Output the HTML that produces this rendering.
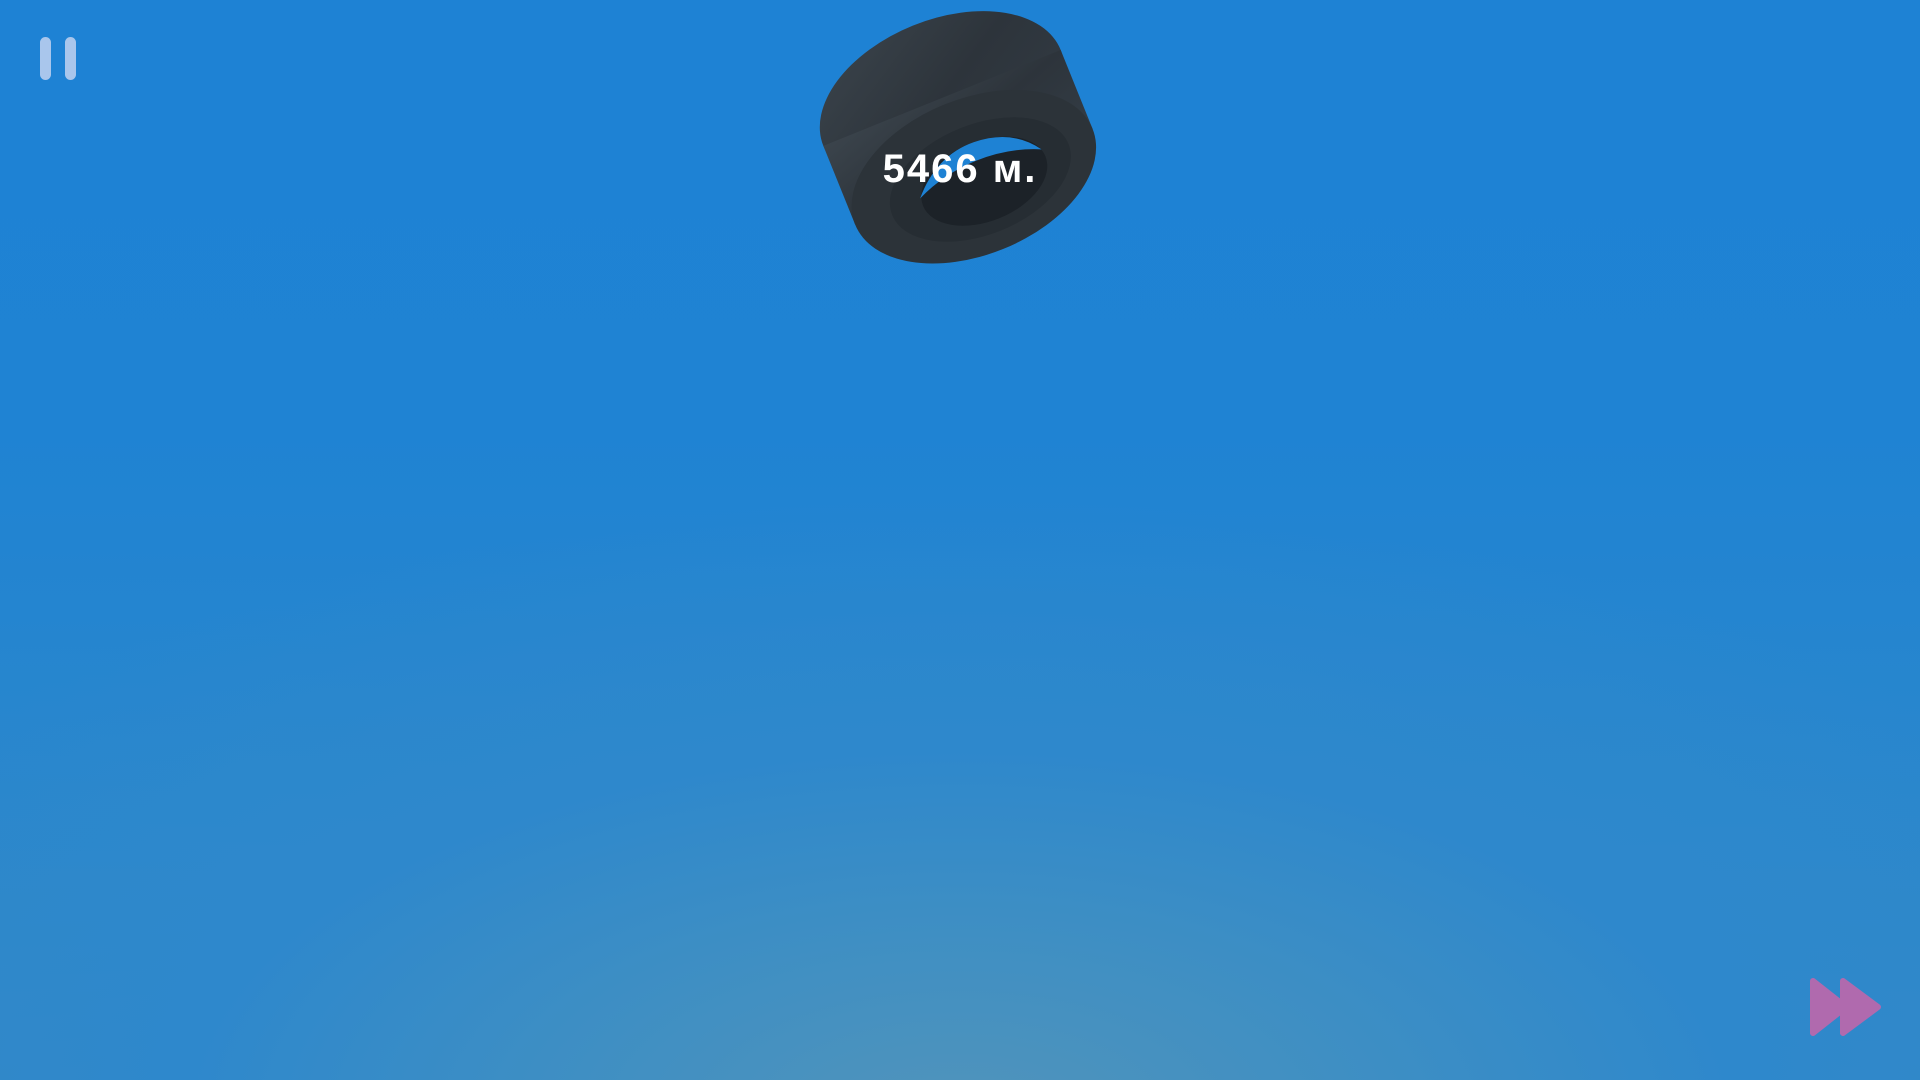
<!DOCTYPE html>
<html><head><meta charset="utf-8"><style>
html,body{margin:0;padding:0;width:1920px;height:1080px;overflow:hidden}
body{background:
radial-gradient(ellipse 1300px 620px at 960px 1120px, #5194bb 0%, #3f8fc3 30%, #2e88cc 60%, rgba(30,130,212,0) 100%),
linear-gradient(#1e82d4 0%, #1f83d3 40%, #2a87cc 75%, #3589c4 100%);position:relative;font-family:"Liberation Sans",sans-serif}
.bar{position:absolute;top:37px;width:11px;height:43px;border-radius:6px;background:#a9c6ec}
.txt{position:absolute;left:830px;width:260px;top:147px;text-align:center;color:#fff;font-weight:bold;font-size:40px;letter-spacing:2px}
</style></head><body>
<div class="bar" style="left:40px"></div><div class="bar" style="left:65px"></div>
<svg style="position:absolute;left:0;top:0" width="1920" height="1080">
<defs>
<linearGradient id="g" x1="0" y1="0" x2="1" y2="1"><stop offset="0" stop-color="#3b444c"/><stop offset="0.5" stop-color="#2d343b"/><stop offset="1" stop-color="#333c45"/></linearGradient>
</defs>
<g transform="rotate(-22 957 135)">
<ellipse cx="957" cy="95" rx="128" ry="78" fill="url(#g)"/>
<rect x="829" y="95" width="256" height="85" fill="url(#g)"/>
<ellipse cx="957" cy="180" rx="128" ry="78" fill="#2c3339"/>
<ellipse cx="962" cy="185" rx="95" ry="55" fill="#262d33"/>
<ellipse cx="965" cy="188" rx="66" ry="40" fill="#1c2228"/>
<path d="M899 180 Q930 146 970 148 Q1010 150 1030 180 Q1000 166 965 166 Q930 166 899 180Z" fill="#1e82d4"/>
</g>
</svg>
<div class="txt">5466 м.</div>
<svg style="position:absolute;left:1808px;top:975px" width="80" height="64">
<path d="M5 6 L38 32 L5 58 Z" fill="#b06aae" stroke="#b06aae" stroke-width="6" stroke-linejoin="round"/>
<path d="M35 6 L70 32 L35 58 Z" fill="#b06aae" stroke="#b06aae" stroke-width="6" stroke-linejoin="round"/>
</svg>
</body></html>
